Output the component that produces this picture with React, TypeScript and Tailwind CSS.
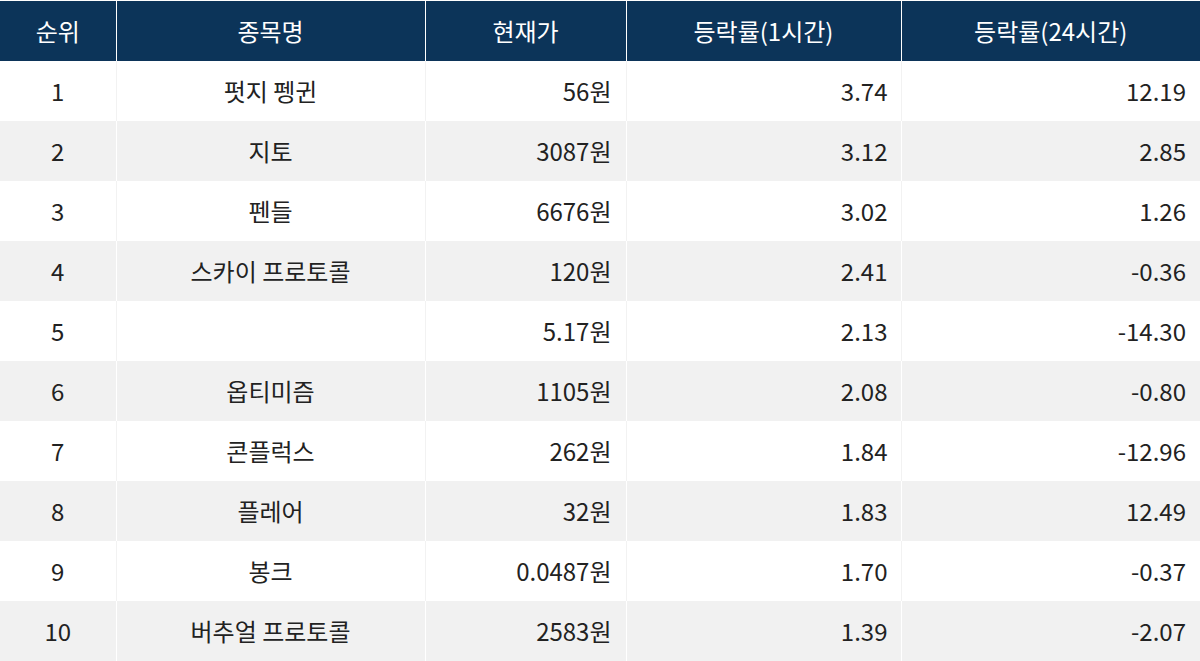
const rows = [
  { rank: 1, name: "펏지 펭귄", price: "56원", h1: "3.74", h24: "12.19" },
  { rank: 2, name: "지토", price: "3087원", h1: "3.12", h24: "2.85" },
  { rank: 3, name: "펜들", price: "6676원", h1: "3.02", h24: "1.26" },
  { rank: 4, name: "스카이 프로토콜", price: "120원", h1: "2.41", h24: "-0.36" },
  { rank: 5, name: "", price: "5.17원", h1: "2.13", h24: "-14.30" },
  { rank: 6, name: "옵티미즘", price: "1105원", h1: "2.08", h24: "-0.80" },
  { rank: 7, name: "콘플럭스", price: "262원", h1: "1.84", h24: "-12.96" },
  { rank: 8, name: "플레어", price: "32원", h1: "1.83", h24: "12.49" },
  { rank: 9, name: "봉크", price: "0.0487원", h1: "1.70", h24: "-0.37" },
  { rank: 10, name: "버추얼 프로토콜", price: "2583원", h1: "1.39", h24: "-2.07" },
];

const headers = ["순위", "종목명", "현재가", "등락률(1시간)", "등락률(24시간)"];

export default function App() {
  return (
    <div
      className="w-[1200px] h-[661px] bg-white text-[#222] overflow-hidden"
      style={{ fontFamily: '"Noto Sans CJK KR", "Noto Sans", sans-serif' }}
    >
      <table className="w-[1200px] table-fixed border-collapse text-[24px] leading-none">
        <colgroup>
          <col className="w-[116px]" />
          <col className="w-[309px]" />
          <col className="w-[201px]" />
          <col className="w-[275px]" />
          <col className="w-[299px]" />
        </colgroup>
        <thead>
          <tr className="h-[60px] bg-[#0c3459] text-white">
            {headers.map((h, i) => (
              <th
                key={h}
                className={`font-normal text-center border-t border-white ${i < 4 ? "border-r border-white" : ""}`}
              >
                {h}
              </th>
            ))}
          </tr>
        </thead>
        <tbody>
          {rows.map((r, idx) => {
            const even = idx % 2 === 1;
            const line = even ? "border-white" : "border-[#f2f2f2]";
            return (
              <tr key={r.rank} className={`h-[60px] ${even ? "bg-[#f1f1f1]" : "bg-white"}`}>
                <td className={`text-center border-r ${line}`}>{r.rank}</td>
                <td className={`text-center border-r ${line}`}>{r.name}</td>
                <td className={`text-right pr-[14px] border-r ${line}`}>{r.price}</td>
                <td className={`text-right pr-[13px] border-r ${line}`}>{r.h1}</td>
                <td className="text-right pr-[14px]">{r.h24}</td>
              </tr>
            );
          })}
        </tbody>
      </table>
    </div>
  );
}
